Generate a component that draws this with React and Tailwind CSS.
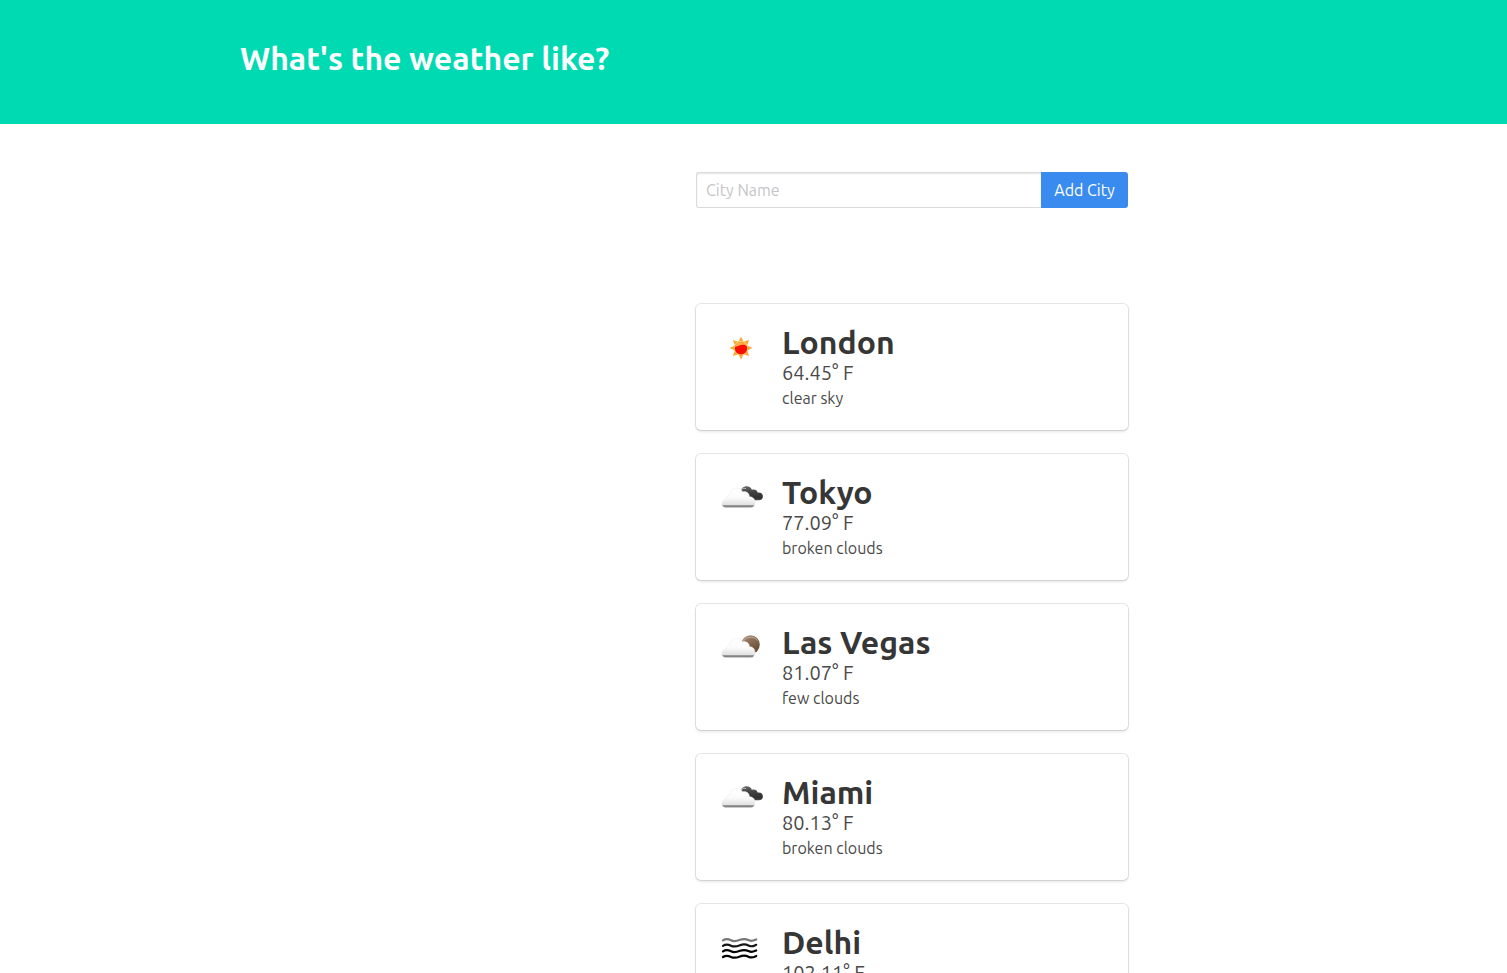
import { useState } from "react";

function SunIcon() {
  const rays = [0, 45, 90, 135, 180, 225, 270, 315];
  return (
    <svg viewBox="0 0 50 50" className="size-[50px]" aria-hidden="true">
      {rays.map((angle) => (
        <path
          key={angle}
          d="M25 12.6 L27.5 17.8 L22.5 17.8 Z"
          fill="#f7a733"
          transform={`rotate(${angle} 25 24)`}
        />
      ))}
      <circle cx="25" cy="24" r="7.2" fill="#ffcf66" />
      <circle cx="25" cy="24.3" r="6.2" fill="#fb0d00" />
      <path
        d="M18.9 22.8 C19.4 19.8 21.8 17.9 25 17.9 C28.2 17.9 30.6 19.8 31.1 22.8 C29.4 20.6 27.4 20.4 25 21 C22.8 21.6 20.6 23 18.9 22.8 Z"
        fill="#fcae45"
      />
    </svg>
  );
}

function FrontCloud() {
  return (
    <>
      <defs>
        <linearGradient id="cloudFill" x1="0" y1="0" x2="0" y2="1">
          <stop offset="0" stopColor="#ffffff" />
          <stop offset="0.5" stopColor="#fbfbfb" />
          <stop offset="0.84" stopColor="#e2e2e2" />
          <stop offset="0.9" stopColor="#8c8c8c" />
          <stop offset="1" stopColor="#777777" />
        </linearGradient>
      </defs>
      <path
        d="M10 33.6 C7.4 33.6 5.8 32 5.9 29.6 C6 27.3 7.6 25.6 10 25.2 C10.2 22.6 12 21 13.8 21 C14.2 17 17.2 14.2 20.8 14.2 C23.4 14.2 25.6 15.6 26.6 17.8 C30.4 16.8 33.4 19.2 33.6 22.8 C36.8 22.6 39 25 39 28.2 C39 31.6 37.3 33.6 34.7 33.6 Z"
        fill="url(#cloudFill)"
        stroke="#e2e2e2"
        strokeWidth="0.4"
      />
    </>
  );
}

function BrokenCloudsIcon() {
  return (
    <svg viewBox="0 0 50 50" className="size-[50px]" aria-hidden="true">
      <defs>
        <linearGradient id="darkCloud" x1="0" y1="0" x2="0" y2="1">
          <stop offset="0" stopColor="#6a6a6a" />
          <stop offset="0.4" stopColor="#424242" />
          <stop offset="0.8" stopColor="#303030" />
          <stop offset="1" stopColor="#4b4b4b" />
        </linearGradient>
      </defs>
      <path
        d="M24 18.4 C24.6 14.8 27.4 12.3 30.8 12.3 C33.4 12.3 35.2 13.8 35.8 15.8 C38.6 14.8 41.2 16.2 41.6 18.5 C44.8 18 46.9 19.8 46.9 22.2 C46.9 24.8 45.4 26.3 43 26.3 L34 26.3 Z"
        fill="url(#darkCloud)"
      />
      <path d="M24.8 16.2 C26.4 14.4 28.4 14 30 14.6" fill="none" stroke="#c8c8c8" strokeWidth="0.9" />
      <FrontCloud />
    </svg>
  );
}

function FewCloudsIcon() {
  return (
    <svg viewBox="0 0 50 50" className="size-[50px]" aria-hidden="true">
      <defs>
        <linearGradient id="moon" x1="0" y1="0" x2="0.5" y2="1">
          <stop offset="0" stopColor="#b99e89" />
          <stop offset="0.4" stopColor="#8e6f57" />
          <stop offset="1" stopColor="#694a34" />
        </linearGradient>
      </defs>
      <circle cx="34.5" cy="20.6" r="9.3" fill="url(#moon)" />
      <path d="M27 17 Q30.4 12.8 35.6 13.2 Q39.6 13.6 41.4 16.6" fill="none" stroke="#cbb5a5" strokeWidth="0.8" />
      <FrontCloud />
    </svg>
  );
}

function MistIcon() {
  const lines = [
    { y: 15.8, color: "#777777" },
    { y: 21.2, color: "#151515" },
    { y: 26.8, color: "#000000" },
    { y: 32.4, color: "#000000" },
  ];
  return (
    <svg viewBox="0 0 50 50" className="size-[50px]" aria-hidden="true">
      {lines.map(({ y, color }) => (
        <path
          key={y}
          d={`M7 ${y + 0.6} C9 ${y - 0.8} 12 ${y - 1} 15 ${y + 0.5} S21 ${y + 1.2} 24 ${y} S30 ${y - 1} 33 ${y + 0.5} S38 ${y + 0.6} 40.2 ${y - 0.4}`}
          fill="none"
          stroke={color}
          strokeWidth="2.2"
          strokeLinecap="round"
        />
      ))}
    </svg>
  );
}

const cities = [
  { name: "London", temp: "64.45", description: "clear sky", Icon: SunIcon },
  { name: "Tokyo", temp: "77.09", description: "broken clouds", Icon: BrokenCloudsIcon },
  { name: "Las Vegas", temp: "81.07", description: "few clouds", Icon: FewCloudsIcon },
  { name: "Miami", temp: "80.13", description: "broken clouds", Icon: BrokenCloudsIcon },
  { name: "Delhi", temp: "102.11", description: "haze", Icon: MistIcon },
];

function CityCard({ name, temp, description, Icon }) {
  return (
    <article className="flex gap-4 rounded-[5px] bg-white p-5 shadow-[0_2px_3px_rgba(10,10,10,0.1),0_0_0_1px_rgba(10,10,10,0.1)]">
      <div className="shrink-0">
        <Icon />
      </div>
      <div className="min-w-0 text-[#4a4a4a]">
        <h2 className="font-['Ubuntu_Bold','Ubuntu','Noto_Sans',sans-serif] text-[32px] leading-9 font-bold text-[#363636]">{name}</h2>
        <p className="text-[20px] leading-[26px]">{temp}° F</p>
        <p className="text-base leading-6">{description}</p>
      </div>
    </article>
  );
}

export default function App() {
  const [city, setCity] = useState("");
  return (
    <div className="min-h-screen bg-white font-['Ubuntu','Noto_Sans',sans-serif] text-base text-[#4a4a4a]">
      <header className="bg-[#00dab2] pt-10 pr-6 pb-12 pl-6 md:pl-60">
        <h1 className="font-['Ubuntu_Bold','Ubuntu','Noto_Sans',sans-serif] text-[32px] leading-9 font-bold text-white">What's the weather like?</h1>
      </header>
      <main className="grid grid-cols-[minmax(0,696fr)_minmax(320px,432fr)_minmax(0,379fr)] py-12">
        <div className="col-start-2 flex flex-col gap-24">
          <form className="flex h-9" onSubmit={(event) => event.preventDefault()}>
            <input
              type="text"
              aria-label="City Name"
              placeholder="City Name"
              value={city}
              onChange={(event) => setCity(event.target.value)}
              className="min-w-0 flex-1 rounded-l-[3px] border border-r-0 border-[#dbdbdb] bg-white px-[9px] text-base text-[#363636] shadow-[inset_0_1px_2px_rgba(10,10,10,0.1)] outline-none placeholder:text-[#c4c5c7]"
            />
            <button type="submit" className="w-[87px] shrink-0 rounded-r-[3px] bg-[#3a8bf0] text-base text-white">
              Add City
            </button>
          </form>
          <div className="flex flex-col gap-6">
            {cities.map((item) => (
              <CityCard key={item.name} {...item} />
            ))}
          </div>
        </div>
      </main>
    </div>
  );
}
